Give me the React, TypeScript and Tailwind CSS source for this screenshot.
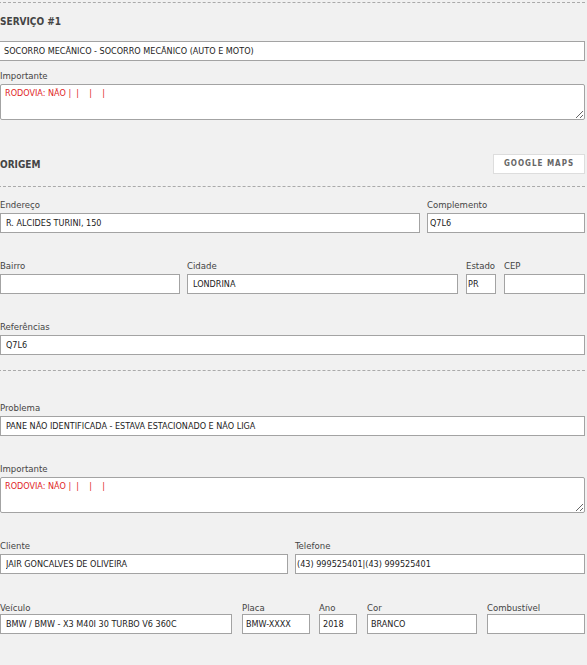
import React from "react";

type FieldProps = {
  label?: string;
  value?: string;
  className?: string;
  inputClass?: string;
  labelGap?: string;
};

function Field({ label, value = "", className = "", inputClass = "px-[4px]", labelGap = "mt-[3px]" }: FieldProps) {
  return (
    <div className={className}>
      <div className="h-[14px] text-[9.5px] leading-[17px] text-[#444] whitespace-nowrap">{label}</div>
      <input
        readOnly
        value={value}
        className={`${labelGap} block h-[20px] w-full border border-[#a3a3a3] bg-white text-[9px] text-[#222] outline-none ${inputClass}`}
      />
    </div>
  );
}

function Area({ label, value }: { label: string; value: string }) {
  return (
    <div>
      <div className="h-[14px] text-[9.5px] leading-[17px] text-[#444]">{label}</div>
      <textarea
        readOnly
        value={value}
        className="mt-[3px] block h-[36px] w-full rounded-[2px] border border-[#a3a3a3] bg-white px-[4px] pt-[2px] text-[9px] leading-[12px] text-[#e0251f] outline-none"
      />
    </div>
  );
}

export default function App() {
  return (
    <div className="min-h-[665px] overflow-hidden bg-[#f1f1f1] font-['DejaVu_Sans_Condensed','DejaVu_Sans',sans-serif] text-[9px]">
      <div className="ml-[-2px] w-[587px] pt-[2px]">
        <div className="border-t border-dashed border-[#aaa]" />
        <div className="mt-[11px] h-[14px] pl-[2px] text-[10px] leading-[15px] font-bold text-[#444]">SERVIÇO #1</div>
        <input
          readOnly
          value="SOCORRO MECÂNICO - SOCORRO MECÂNICO (AUTO E MOTO)"
          className="mt-[13px] block h-[20px] w-full border border-[#a3a3a3] bg-white px-[5px] text-[9px] text-[#222] outline-none"
        />
        <div className="mt-[6px] pl-[2px]">
          <Area label="Importante" value="RODOVIA: NÃO |  |    |    |" />
        </div>

        <div className="mt-[34px] flex h-[20px] items-center justify-between pl-[2px]">
          <div className="text-[10px] font-bold text-[#444]">ORIGEM</div>
          <button className="h-[20px] w-[92px] border border-[#ddd] bg-white text-[8px] font-bold tracking-[1px] text-[#666]">
            GOOGLE MAPS
          </button>
        </div>
        <div className="mt-[12px] border-t border-dashed border-[#aaa]" />

        <div className="mt-[9px] flex">
          <Field label="Endereço" value="R. ALCIDES TURINI, 150" className="w-[422px] pl-[2px]" inputClass="px-[5px]" />
          <Field label="Complemento" value="Q7L6" className="ml-[7px] w-[158px]" inputClass="px-[2px]" />
        </div>

        <div className="mt-[24px] flex">
          <Field label="Bairro" value="" className="w-[182px] pl-[2px]" />
          <Field label="Cidade" value="LONDRINA" className="ml-[7px] w-[271px]" inputClass="px-[5px]" />
          <Field label="Estado" value="PR" className="ml-[8px] w-[30px]" inputClass="px-[1px]" />
          <Field label="CEP" value="" className="ml-[8px] w-[81px]" />
        </div>

        <div className="mt-[24px]">
          <Field label="Referências" value="Q7L6" className="pl-[2px]" inputClass="px-[5px]" />
        </div>
        <div className="mt-[15px] border-t border-dashed border-[#aaa]" />

        <div className="mt-[28px]">
          <Field label="Problema" value="PANE NÃO IDENTIFICADA - ESTAVA ESTACIONADO E NÃO LIGA" className="pl-[2px]" inputClass="px-[5px]" />
        </div>

        <div className="mt-[24px] pl-[2px]">
          <Area label="Importante" value="RODOVIA: NÃO |  |    |    |" />
        </div>

        <div className="mt-[24px] flex">
          <Field label="Cliente" value="JAIR GONCALVES DE OLIVEIRA" className="w-[290px] pl-[2px]" inputClass="px-[5px]" />
          <Field label="Telefone" value="(43) 999525401|(43) 999525401" className="ml-[7px] w-[290px]" inputClass="px-[1px]" />
        </div>

        <div className="mt-[25px] flex">
          <Field label="Veículo" value="BMW / BMW - X3 M40I 30 TURBO V6 360C" className="w-[234px] pl-[2px]" inputClass="px-[5px]" labelGap="mt-[1px]" />
          <Field label="Placa" value="BMW-XXXX" className="ml-[10px] w-[68px]" inputClass="px-[3px]" labelGap="mt-[1px]" />
          <Field label="Ano" value="2018" className="ml-[9px] w-[38px]" inputClass="px-[3px]" labelGap="mt-[1px]" />
          <Field label="Cor" value="BRANCO" className="ml-[10px] w-[110px]" inputClass="px-[3px]" labelGap="mt-[1px]" />
          <Field label="Combustível" value="" className="ml-[10px] w-[98px]" labelGap="mt-[1px]" />
        </div>
      </div>
    </div>
  );
}
